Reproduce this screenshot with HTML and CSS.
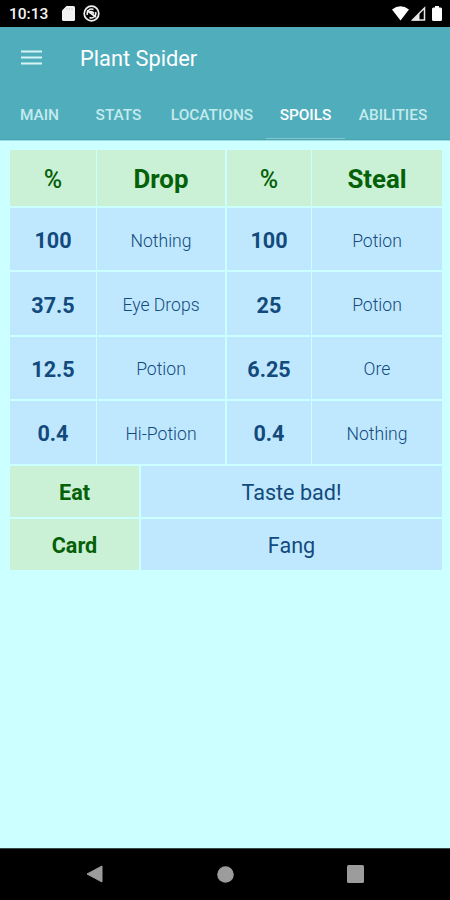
FILE: index.html
```html
<!DOCTYPE html>
<html lang="en">

<head>
    <meta charset="UTF-8">
    <meta name="viewport" content="width=device-width, initial-scale=1.0">
    <title>Plant Spider</title>
    <link rel="stylesheet" href="styles.css">
</head>

<body>
    <div class="status-bar">
        <span class="clock">10:13</span>
        <svg class="sd-icon" width="13" height="15" viewBox="0 0 13 15">
            <path d="M4.5 0H11.5Q13 0 13 1.5V13.5Q13 15 11.5 15H1.5Q0 15 0 13.5V4.5Z" fill="#f2f2f2" />
            <path d="M5 2v2M7.500 2v2M10 2v2" stroke="#ccc" stroke-width="1" />
        </svg>
        <svg class="sync-icon" width="17" height="17" viewBox="0 0 17 17" fill="none" stroke="#f2f2f2">
            <circle cx="8.500" cy="8.500" r="7.300" stroke-width="1.700" />
            <path d="M4.400 10A4.500 4.500 0 0 1 10.500 4.500M12.600 7A4.500 4.500 0 0 1 6.500 12.500" stroke-width="1.500" />
            <path d="M4 5.500L13 12M6 7.500Q8.500 5.500 11 8.500" stroke-width="1.700" />
        </svg>
        <div class="status-right">
            <svg width="17" height="15" viewBox="0 0 17 15">
                <path d="M0 3.500Q8.500-3 17 3.500L8.500 14.500Z" fill="#fff" />
            </svg>
            <svg class="signal-icon" width="15" height="15" viewBox="0 0 15 15">
                <path d="M13.500 2V14H1.500Z" fill="none" stroke="#e8e8e8" stroke-width="1.500" />
                <path d="M1 14.500L8.500 7V14.500Z" fill="#e8e8e8" />
            </svg>
            <svg class="battery-icon" width="10" height="15" viewBox="0 0 10 15">
                <path d="M3 0H7V1.500H8.500Q10 1.500 10 3V13.500Q10 15 8.500 15H1.500Q0 15 0 13.500V3Q0 1.500 1.500 1.500H3Z" fill="#fff" />
            </svg>
        </div>
    </div>

    <header class="app-bar">
        <div class="toolbar">
            <svg class="menu-icon" width="21" height="15" viewBox="0 0 21 15">
                <path d="M0 1.500H21M0 7.500H21M0 13.500H21" stroke="#d6f4f5" stroke-width="2" />
            </svg>
            <h1 class="title">Plant Spider</h1>
        </div>
        <nav class="tabs">
            <a class="tab tab-main">MAIN</a>
            <a class="tab tab-stats">STATS</a>
            <a class="tab tab-locations">LOCATIONS</a>
            <a class="tab tab-spoils active">SPOILS</a>
            <a class="tab tab-abilities">ABILITIES</a>
        </nav>
    </header>

    <main class="content">
        <div class="spoils">
            <div class="cell head percent">%</div>
            <div class="cell head">Drop</div>
            <div class="cell head percent">%</div>
            <div class="cell head">Steal</div>

            <div class="cell rate">100</div>
            <div class="cell item">Nothing</div>
            <div class="cell rate">100</div>
            <div class="cell item">Potion</div>

            <div class="cell rate">37.5</div>
            <div class="cell item">Eye Drops</div>
            <div class="cell rate">25</div>
            <div class="cell item">Potion</div>

            <div class="cell rate">12.5</div>
            <div class="cell item">Potion</div>
            <div class="cell rate">6.25</div>
            <div class="cell item">Ore</div>

            <div class="cell rate">0.4</div>
            <div class="cell item">Hi-Potion</div>
            <div class="cell rate">0.4</div>
            <div class="cell item">Nothing</div>
        </div>
        <div class="extras">
            <div class="cell label">Eat</div>
            <div class="cell value">Taste bad!</div>
            <div class="cell label">Card</div>
            <div class="cell value">Fang</div>
        </div>
    </main>

    <footer class="nav-bar">
        <svg width="17" height="18" viewBox="0 0 17 18">
            <path d="M16 1V17L1 9Z" fill="#9c9c9c" stroke="#9c9c9c" stroke-linejoin="round" />
        </svg>
        <svg width="17" height="17" viewBox="0 0 17 17">
            <circle cx="8.500" cy="8.500" r="8.300" fill="#9c9c9c" />
        </svg>
        <svg width="17" height="18" viewBox="0 0 17 18">
            <rect width="17" height="18" rx="1.500" fill="#9c9c9c" />
        </svg>
    </footer>
</body>

</html>
```
FILE: styles.css
```css
* {
    box-sizing: border-box;
}

body {
    margin: 0;
    width: 450px;
    height: 900px;
    display: flex;
    flex-direction: column;
    background-color: #ccffff;
    font-family: Roboto, sans-serif;
    overflow: hidden;
}

.status-bar {
    height: 27px;
    background-color: #000;
    display: flex;
    align-items: center;
    padding: 0 8px 0 9px;
}

.clock {
    width: 53px;
    color: #f2f2f2;
    font-size: 15.5px;
    font-weight: 500;
    line-height: 27px;
    padding-top: 1px;
}

.sync-icon {
    margin-left: 8px;
}

.status-right {
    display: flex;
    align-items: center;
    margin-left: auto;
}

.signal-icon {
    margin-left: 2px;
}

.battery-icon {
    margin-left: 6px;
}

.app-bar {
    height: 113px;
    background-color: #50aebc;
    border-bottom: 1px solid #4aa5b3;
}

.toolbar {
    height: 63px;
    display: flex;
    align-items: center;
    padding-left: 21px;
}

.menu-icon {
    margin-bottom: 2px;
}

.title {
    margin: 0 0 0 38px;
    color: #fff;
    font-size: 21.8px;
    font-weight: 400;
}

.tabs {
    height: 49px;
    display: flex;
}

.tab {
    display: flex;
    align-items: center;
    justify-content: center;
    color: #c5eaed;
    font-size: 15.4px;
    font-weight: 500;
}

.tab-main {
    width: 79px;
}

.tab-stats {
    width: 79px;
}

.tab-locations {
    width: 108px;
}

.tab-spoils {
    width: 79px;
}

.tab-abilities {
    width: 96px;
}

.tab.active {
    color: #fff;
    box-shadow: inset 0 -1px #80c6cc;
}

.content {
    flex: 1;
    padding: 9px 8px 0 10px;
    border-top: 1px solid #9bdde3;
}

.spoils {
    display: grid;
    grid-template-columns: 86px 129px 84px 130px;
    grid-template-rows: 56px repeat(4, 62.4px);
    gap: 2px 1px;
}

/* wider gap between the drop and steal halves */
.spoils .cell:nth-child(4n + 2) {
    margin-right: 1px;
}

.extras {
    display: grid;
    grid-template-columns: 129px 301px;
    grid-template-rows: 51px 51px;
    gap: 2px;
    margin-top: 2px;
}

.cell {
    display: flex;
    align-items: center;
    justify-content: center;
    background-color: #bfe8ff;
    color: #134a7c;
}

.cell.head,
.cell.label {
    background-color: #caf1d5;
    color: #056008;
    font-weight: 700;
}

.cell.head {
    font-size: 25.8px;
    padding-top: 2px;
}

.cell.percent {
    font-size: 25px;
    font-weight: 500;
}

.rate {
    font-size: 21.6px;
    font-weight: 700;
    padding-top: 3px;
}

.item {
    font-size: 17.6px;
    font-weight: 300;
    padding-top: 3px;
}

.label {
    font-size: 21.6px;
    padding-top: 2px;
}

.value {
    font-size: 21.6px;
    padding-top: 2px;
}

.nav-bar {
    height: 52px;
    background-color: #000;
    display: flex;
    align-items: center;
    justify-content: space-between;
    padding: 0 86px 1px;
    border-top: 1px solid #38494a;
}
```
